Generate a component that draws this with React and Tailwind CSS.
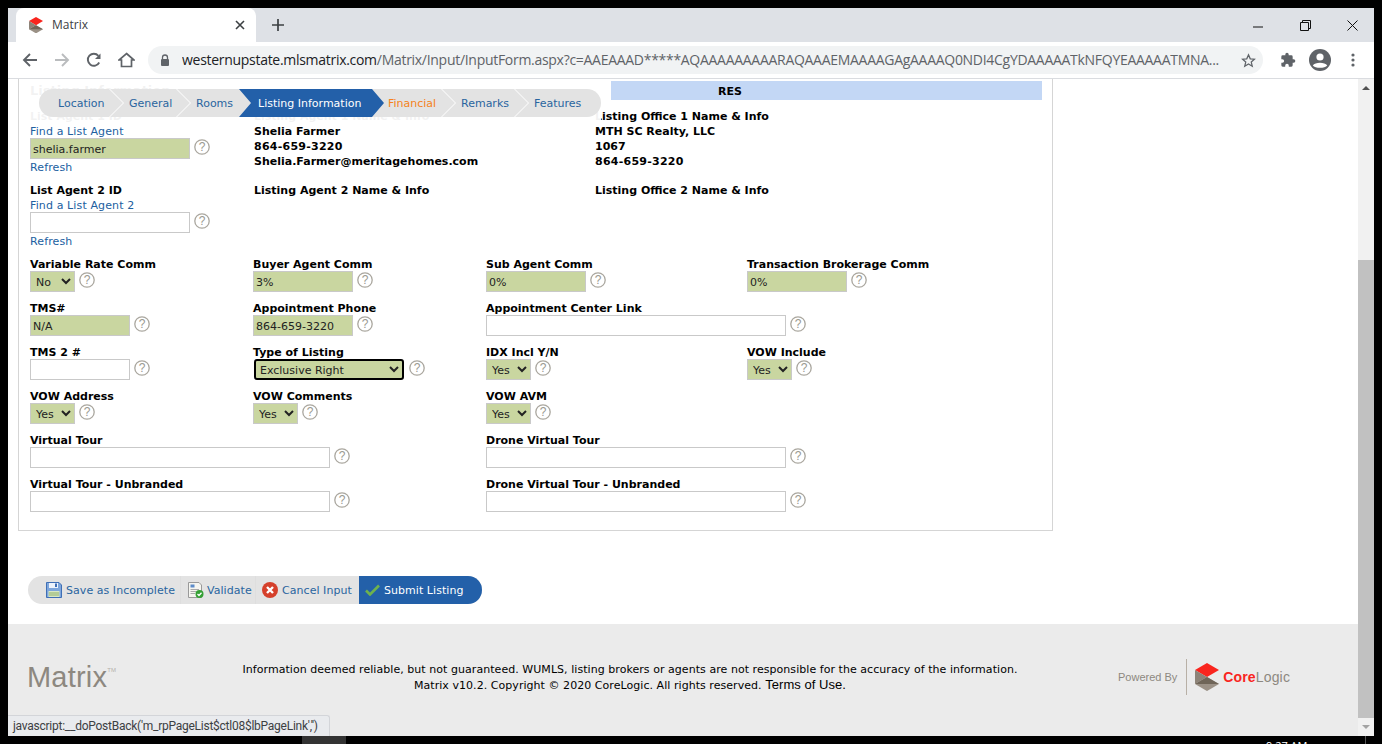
import React from "react";

const V = "font-['DejaVu_Sans',Verdana,sans-serif]";

function Help({ className = "" }) {
  return (
    <svg width="16" height="16" viewBox="0 0 16 16" className={`mt-px shrink-0 ${className}`}>
      <circle cx="8" cy="8" r="7.2" fill="#fff" stroke="#aaa79f" strokeWidth="1.3" />
      <text x="8" y="12.2" textAnchor="middle" fontSize="12" fill="#9a9a92" fontFamily="Liberation Sans, sans-serif">?</text>
    </svg>
  );
}

function Label({ children }) {
  return <div className="h-[13px] text-[11px] leading-[13px] font-bold whitespace-nowrap text-black">{children}</div>;
}

function Link({ children, className = "" }) {
  return <div className={`h-[13px] text-[11px] leading-[13px] tracking-[0.12px] text-[#21609f] whitespace-nowrap ${className}`}>{children}</div>;
}

function Input({ w, value = "", req }) {
  return (
    <input
      readOnly
      value={value}
      className={`${w} h-[21px] border border-[#c9c9c9] px-[2px] pt-[2px] text-[11px] text-[#222] outline-none ${req ? "bg-[#c9d6a0]" : "bg-white"}`}
    />
  );
}

function Sel({ value }) {
  return (
    <select
      defaultValue={value}
      className="w-[45px] h-[21px] border border-[#c9c9c9] bg-[#c9d6a0] text-[11px] text-[#222] pl-[1px] pt-[2px] outline-none"
    >
      <option>{value}</option>
    </select>
  );
}

function Field({ label, children, helpClass }) {
  return (
    <div className="h-[44px]">
      <Label>{label}</Label>
      <div className="flex items-start gap-1">
        {children}
        <Help className={helpClass} />
      </div>
    </div>
  );
}

function Chevron() {
  return (
    <svg width="16" height="28" viewBox="0 0 16 28" className="absolute left-full top-0 z-10 -ml-px">
      <path d="M0.5 0 L14.5 14 L0.5 28" fill="#e3e3e3" stroke="#fff" strokeWidth="1" />
    </svg>
  );
}

function Crumb({ label, w, color = "text-[#2a659f]", pl = "pl-[19px]", chevron = true }) {
  return (
    <div className={`relative h-[28px] ${w} ${pl} leading-[30px] ${color} whitespace-nowrap`}>
      <span className="relative z-20">{label}</span>
      {chevron && <Chevron />}
    </div>
  );
}

function CoreLogicMark({ s = 24 }) {
  return (
    <svg width={s} height={s * 1.17} viewBox="0 0 24 28">
      <path d="M12 0 L24 7 L12 14 L0 7 Z" fill="#f9251e" />
      <path d="M0 7 L12 14 L0 21 Z" fill="#8d8378" />
      <path d="M0 21 L12 14 L24 21 L12 28 Z" fill="#9b9186" />
      <path d="M0 21 L12 14 L24 21 Z" fill="#6f6558" />
    </svg>
  );
}

export default function App() {
  return (
    <div className={`relative w-[1382px] h-[744px] bg-black overflow-hidden ${V}`}>
      <div className="h-[8px]" />
      <div className="ml-[8px] w-[1366px] h-[728px] flex flex-col bg-white">
        {/* Tab strip */}
        <div className="h-[34px] bg-[#dee1e6] flex items-end font-['Open_Sans',sans-serif]">
          <div className="ml-[8px] w-[240px] h-[34px] bg-white rounded-t-[8px] flex items-center pl-[13px] pr-[11px]">
            <CoreLogicMark s={14} />
            <span className="ml-[9px] text-[12px] text-[#3c4043] flex-1">Matrix</span>
            <svg width="10" height="10" viewBox="0 0 10 10"><path d="M1 1 L9 9 M9 1 L1 9" stroke="#3c4043" strokeWidth="1.6" /></svg>
          </div>
          <div className="ml-[15px] h-[34px] flex items-center">
            <svg width="14" height="14" viewBox="0 0 14 14"><path d="M7 1 V13 M1 7 H13" stroke="#3c4043" strokeWidth="1.7" /></svg>
          </div>
          <div className="flex-1" />
          <div className="h-[34px] flex items-center text-[#222]">
            <svg width="12" height="12" viewBox="0 0 12 12" className="mr-[36px]"><path d="M1 8 H11" stroke="#111" strokeWidth="1" /></svg>
            <svg width="11" height="11" viewBox="0 0 11 11" className="mr-[36px]"><path d="M0.5 2.5 H8.5 V10.5 H0.5 Z M2.5 2.5 V0.5 H10.5 V8.5 H8.5" fill="none" stroke="#111" strokeWidth="1" /></svg>
            <svg width="11" height="11" viewBox="0 0 11 11" className="mr-[16px]"><path d="M0.5 0.5 L10.5 10.5 M10.5 0.5 L0.5 10.5" stroke="#111" strokeWidth="1" /></svg>
          </div>
        </div>

        {/* Toolbar */}
        <div className="h-[37px] border-b border-[#dadce0] flex items-center shrink-0 bg-white">
          <svg width="16" height="16" viewBox="0 0 16 16" className="ml-[14px]"><path d="M15 8 H2 M8 2 L2 8 L8 14" fill="none" stroke="#5f6368" strokeWidth="1.9" /></svg>
          <svg width="16" height="16" viewBox="0 0 16 16" className="ml-[16px]"><path d="M1 8 H14 M8 2 L14 8 L8 14" fill="none" stroke="#babcbe" strokeWidth="1.9" /></svg>
          <svg width="16" height="16" viewBox="0 0 16 16" className="ml-[16px]"><path d="M13.2 10.5 A6 6 0 1 1 12.4 3.8" fill="none" stroke="#5f6368" strokeWidth="1.9" /><path d="M14.5 1.5 V7 H9 Z" fill="#5f6368" /></svg>
          <svg width="17" height="16" viewBox="0 0 17 16" className="ml-[16px]"><path d="M8.5 1.5 L16 8 H13.5 V14.5 H3.5 V8 H1 Z" fill="none" stroke="#5f6368" strokeWidth="1.7" /></svg>
          <div className="ml-[13px] w-[1115px] h-[28px] rounded-full bg-[#f1f3f4] flex items-center font-['Open_Sans',sans-serif] text-[14px] leading-[28px]">
            <svg width="10" height="12" viewBox="0 0 10 12" className="ml-[12px] shrink-0"><path d="M2.5 5 V3.5 A2.5 2.5 0 0 1 7.5 3.5 V5" fill="none" stroke="#5f6368" strokeWidth="1.3" /><rect x="1" y="5" width="8" height="7" rx="1" fill="#5f6368" /></svg>
            <span className="ml-[12px] w-[1039px] whitespace-nowrap overflow-hidden tracking-[-0.29px] text-[#5f6368]">
              <span className="text-[#202124]">westernupstate.mlsmatrix.com</span>/Matrix/Input/InputForm.aspx?c=AAEAAAD*****AQAAAAAAAAARAQAAAEMAAAAGAgAAAAQ0NDI4CgYDAAAAATkNFQYEAAAAATMNA...
            </span>
            <svg width="15" height="15" viewBox="0 0 24 24" className="ml-[20px]"><path d="M12 3 L14.8 9.4 L21.5 10 L16.4 14.5 L18 21.2 L12 17.6 L6 21.2 L7.6 14.5 L2.5 10 L9.2 9.4 Z" fill="none" stroke="#5f6368" strokeWidth="2" /></svg>
          </div>
          <svg width="16" height="16" viewBox="0 0 24 24" className="ml-[17px]"><path d="M20.5 11H19V7a2 2 0 0 0-2-2h-4V3.5a2.5 2.5 0 0 0-5 0V5H4a2 2 0 0 0-2 2v3.8h1.5a2.7 2.7 0 0 1 0 5.4H2V20a2 2 0 0 0 2 2h3.8v-1.5a2.7 2.7 0 0 1 5.4 0V22H17a2 2 0 0 0 2-2v-4h1.5a2.5 2.5 0 0 0 0-5z" fill="#5f6368" /></svg>
          <svg width="22" height="22" viewBox="0 0 22 22" className="ml-[13px]"><circle cx="11" cy="11" r="11" fill="#5f6368" /><circle cx="11" cy="8" r="3.6" fill="#fff" /><path d="M3.8 16.4 C6 12.8 16 12.8 18.2 16.4 C16 19.6 6 19.6 3.8 16.4 Z" fill="#fff" /></svg>
          <svg width="4" height="14" viewBox="0 0 4 14" className="ml-[20px]"><circle cx="2" cy="2" r="1.6" fill="#5f6368" /><circle cx="2" cy="7" r="1.6" fill="#5f6368" /><circle cx="2" cy="12" r="1.6" fill="#5f6368" /></svg>
        </div>

        {/* Page */}
        <div className="relative flex-1 flex min-h-0">
          <div className="w-[1350px] flex flex-col">
            {/* Form card */}
            <div className="relative ml-[10px] w-[1035px] h-[452px] border-x border-b border-[#d5d5d5] pl-[11px] shrink-0">
              <div className="flex pt-[2px] h-[31px]">
                <div className="w-[581px] text-[13px] font-bold leading-[19px] text-black">Listing Information</div>
                <div className="w-[431px] h-[19px] bg-[#c3d7f5] pl-[107px] text-[11px] font-bold leading-[21px] text-black">RES</div>
              </div>

              <div className="grid grid-cols-[224px_341px_1fr]">
                <div>
                  <Label>List Agent 1 ID</Label>
                  <Link className="mt-[2px]">Find a List Agent</Link>
                  <div className="flex items-start gap-1"><Input w="w-[160px]" value="shelia.farmer" req /><Help /></div>
                  <Link className="mt-[2px]">Refresh</Link>
                  <div className="mt-[10px]"><Label>List Agent 2 ID</Label></div>
                  <Link className="mt-[2px]">Find a List Agent 2</Link>
                  <div className="flex items-start gap-1"><Input w="w-[160px]" /><Help /></div>
                  <Link className="mt-[2px]">Refresh</Link>
                </div>
                <div>
                  <Label>Listing Agent 1 Name &amp; Info</Label>
                  <div className="mt-[1px] text-[11px] leading-[15px] font-bold text-black h-[60px]">
                    <div>Shelia Farmer</div>
                    <div className="tracking-[0.25px]">864-659-3220</div>
                    <div>Shelia.Farmer@meritagehomes.com</div>
                  </div>
                  <Label>Listing Agent 2 Name &amp; Info</Label>
                </div>
                <div>
                  <Label>Listing Office 1 Name &amp; Info</Label>
                  <div className="mt-[1px] text-[11px] leading-[15px] font-bold text-black h-[60px]">
                    <div>MTH SC Realty, LLC</div>
                    <div>1067</div>
                    <div className="tracking-[0.25px]">864-659-3220</div>
                  </div>
                  <Label>Listing Office 2 Name &amp; Info</Label>
                </div>
              </div>

              <div className="mt-[10px] grid grid-cols-[223px_233px_261px_1fr]">
                <Field label="Variable Rate Comm"><Sel value="No" /></Field>
                <Field label="Buyer Agent Comm"><Input w="w-[100px]" value="3%" req /></Field>
                <Field label="Sub Agent Comm"><Input w="w-[100px]" value="0%" req /></Field>
                <Field label="Transaction Brokerage Comm"><Input w="w-[100px]" value="0%" req /></Field>

                <Field label="TMS#"><Input w="w-[100px]" value="N/A" req /></Field>
                <Field label="Appointment Phone"><Input w="w-[100px]" value="864-659-3220" req /></Field>
                <div className="col-span-2"><Field label="Appointment Center Link"><Input w="w-[300px]" /></Field></div>

                <Field label="TMS 2 #"><Input w="w-[100px]" /></Field>
                <Field label="Type of Listing" helpClass="ml-px">
                  <select defaultValue="Exclusive Right" className="ml-px w-[150px] h-[21px] border-2 border-black rounded-[3px] bg-[#c9d6a0] text-[11px] text-[#222] pl-0 pt-[2px] outline-none">
                    <option>Exclusive Right</option>
                  </select>
                </Field>
                <Field label="IDX Incl Y/N"><Sel value="Yes" /></Field>
                <Field label="VOW Include"><Sel value="Yes" /></Field>

                <Field label="VOW Address"><Sel value="Yes" /></Field>
                <Field label="VOW Comments"><Sel value="Yes" /></Field>
                <div className="col-span-2"><Field label="VOW AVM"><Sel value="Yes" /></Field></div>
              </div>

              <div className="grid grid-cols-[456px_1fr]">
                <Field label="Virtual Tour"><Input w="w-[300px]" /></Field>
                <Field label="Drone Virtual Tour"><Input w="w-[300px]" /></Field>
                <Field label="Virtual Tour - Unbranded"><Input w="w-[300px]" /></Field>
                <Field label="Drone Virtual Tour - Unbranded"><Input w="w-[300px]" /></Field>
              </div>
            </div>

            {/* Action buttons */}
            <div className="mt-[45px] ml-[20px] w-[454px] h-[28px] flex rounded-full overflow-hidden bg-[#e3e3e3] text-[11px] leading-[14px] tracking-[0.05px] text-[#2a659f] shrink-0">
              <div className="w-[153px] flex items-center pl-[18px] border-r border-[#dedede]">
                <svg width="16" height="16" viewBox="0 0 16 16" className="shrink-0"><path d="M0.5 0.5 H13 L15.5 3 V15.5 H0.5 Z" fill="#7ea6dc" stroke="#3f6fb5" /><rect x="3" y="1" width="9" height="5" fill="#eef3fb" /><rect x="9" y="1.5" width="2" height="3.5" fill="#3f6fb5" /><rect x="2.5" y="9" width="11" height="6" fill="#d8e8c4" /><path d="M3 11 H13 M3 13 H13" stroke="#8fb06a" /></svg>
                <span className="ml-[4px] mt-[2px] whitespace-nowrap">Save as Incomplete</span>
              </div>
              <div className="w-[75px] flex items-center pl-[7px] border-r border-[#dedede]">
                <svg width="16" height="16" viewBox="0 0 16 16" className="shrink-0"><path d="M0.5 0.5 H11 L13.5 3 V15.5 H0.5 Z" fill="#f5f5f0" stroke="#999" /><rect x="2.5" y="2.5" width="4" height="3" fill="#5d8cc9" /><path d="M2.5 7.5 H11 M2.5 9.5 H8 M2.5 11.5 H7" stroke="#a9a9a9" /><circle cx="11.5" cy="12" r="4" fill="#34a033" /><path d="M9.5 12 L11 13.5 L13.5 10.7" fill="none" stroke="#fff" strokeWidth="1.3" /></svg>
                <span className="ml-[3px] mt-[2px] whitespace-nowrap">Validate</span>
              </div>
              <div className="w-[102px] flex items-center pl-[6px]">
                <svg width="16" height="16" viewBox="0 0 16 16" className="shrink-0"><circle cx="8" cy="8" r="8" fill="#d5402b" /><path d="M5 5 L11 11 M11 5 L5 11" stroke="#fff" strokeWidth="2.4" /></svg>
                <span className="ml-[4px] mt-[2px] whitespace-nowrap">Cancel Input</span>
              </div>
              <div className="flex-1 ml-px bg-[#2360a9] flex items-center pl-[6px] text-white">
                <svg width="15" height="12" viewBox="0 0 15 12" className="shrink-0"><path d="M1 6.5 L5 10.5 L14 1.5" fill="none" stroke="#6fb24d" strokeWidth="2.6" /></svg>
                <span className="ml-[4px] mt-[2px] whitespace-nowrap">Submit Listing</span>
              </div>
            </div>

            {/* Footer */}
            <div className="mt-[20px] flex-1 bg-[#ebebeb] flex items-start">
              <div className="w-[210px] pl-[19px] pt-[35px] font-['Liberation_Sans',sans-serif] text-[#8d8880] text-[29px] tracking-[0.2px] leading-[36px] flex items-start">
                <span>Matrix</span>
                <span className="text-[6px] leading-[10px] mt-[6px] text-[#b5b1ab]">TM</span>
              </div>
              <div className="w-[824px] pt-[38px] text-center text-[11px] leading-[15px] tracking-[0.05px] text-black">
                <div>Information deemed reliable, but not guaranteed. WUMLS, listing brokers or agents are not responsible for the accuracy of the information.</div>
                <div>Matrix v10.2. Copyright © 2020 CoreLogic. All rights reserved. <span className="font-['Liberation_Sans',sans-serif] text-[13px]">Terms of Use.</span></div>
              </div>
              <div className="ml-[76px] pt-[35px] flex items-center font-['Liberation_Sans',sans-serif]">
                <span className="text-[11px] text-[#8d8880] whitespace-nowrap">Powered By</span>
                <div className="ml-[9px] w-px h-[36px] bg-[#b8b0a6]" />
                <div className="ml-[8px]"><CoreLogicMark s={24} /></div>
                <span className="ml-[4px] text-[14px] font-bold whitespace-nowrap tracking-[0.15px]"><span className="text-[#f9251e]">Core</span><span className="text-[#8d8880] font-normal">Logic</span></span>
              </div>
            </div>
          </div>

          {/* Scrollbar */}
          <div className="w-[16px] bg-[#f1f1f1] flex flex-col items-stretch shrink-0">
            <div className="h-[17px] flex items-center justify-center">
              <div className="w-0 h-0 border-x-[4px] border-x-transparent border-b-[4px] border-b-[#505050]" />
            </div>
            <div className="h-[164px]" />
            <div className="flex-1 bg-[#c1c1c1]" />
            <div className="h-[18px] flex items-center justify-center">
              <div className="w-0 h-0 border-x-[4px] border-x-transparent border-t-[4px] border-t-[#a3a3a3]" />
            </div>
          </div>

          {/* Overlay of the sticky page list */}
          <div className="absolute left-[11px] top-0 w-[582px] h-[43px] bg-white/95 pt-[10px] pl-[20px]">
            <div className="w-[562px] h-[28px] flex rounded-full bg-[#e3e3e3] text-[11px]">
              <Crumb label="Location" w="w-[71px]" />
              <Crumb label="General" w="w-[67px]" />
              <Crumb label="Rooms" w="w-[62px]" chevron={false} />
              <div className="relative h-[28px] w-[134px] pl-[19px] leading-[30px] text-white whitespace-nowrap">
                <svg width="146" height="28" viewBox="0 0 146 28" className="absolute left-0 top-0"><path d="M0 0 H133 L145 14 L133 28 H0 L12 14 Z" fill="#2360a9" /></svg>
                <span className="relative">Listing Information</span>
              </div>
              <div className="relative h-[28px] w-[69px] pl-[15px] leading-[30px] text-[#f58220] whitespace-nowrap">
                <span className="relative">Financial</span>
                <Chevron />
              </div>
              <Crumb label="Remarks" w="w-[73px]" />
              <Crumb label="Features" w="w-[86px]" chevron={false} />
            </div>
          </div>

          {/* Status bubble */}
          <div className="absolute left-0 bottom-0 w-[322px] h-[21px] bg-[#e9ebee] border-t border-r border-[#d3d5d9] rounded-tr-[3px] pl-[5px] font-['Roboto',sans-serif] text-[12px] leading-[21px] tracking-[-0.25px] text-[#3c4043] whitespace-nowrap overflow-hidden">
            javascript:__doPostBack('m_rpPageList$ctl08$lbPageLink','')
          </div>
        </div>
      </div>

      {/* Desktop taskbar sliver */}
      <div className="h-[8px] flex overflow-hidden text-white font-['Open_Sans',sans-serif] text-[11px] leading-[14px]">
        <div className="ml-[302px] w-[44px] bg-[#333]" />
        <div className="ml-[920px] mt-[3px]">9:27 AM</div>
        <div className="ml-[58px] w-px bg-[#555]" />
      </div>
    </div>
  );
}
